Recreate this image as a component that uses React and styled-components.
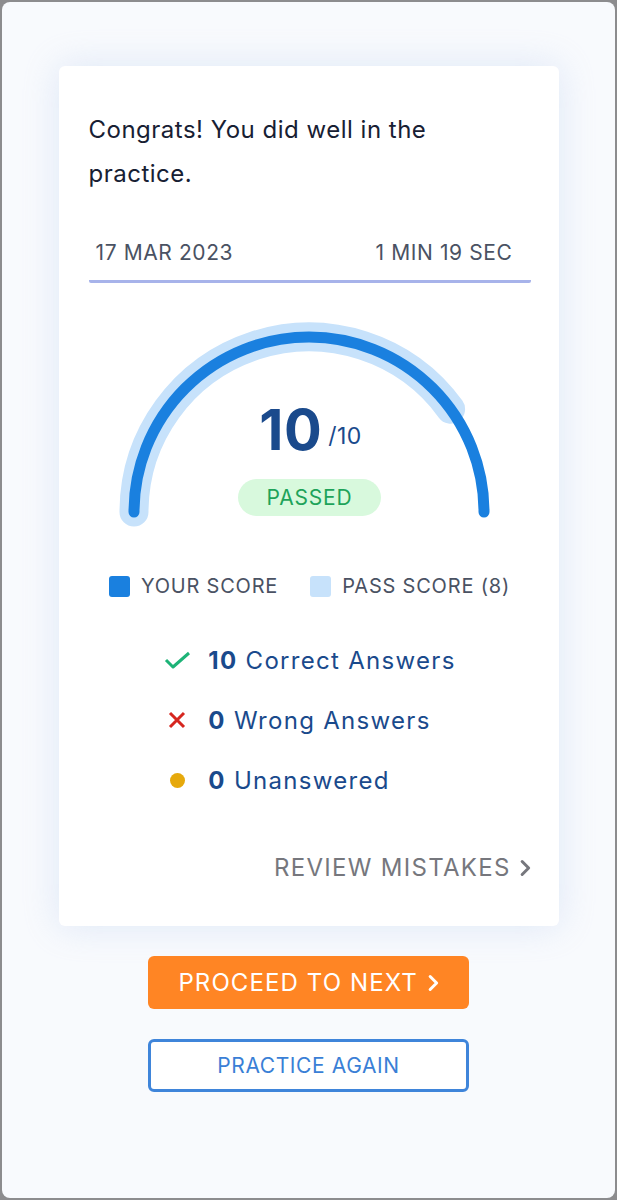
import React from "react";
import styled, { createGlobalStyle } from "styled-components";

const Global = createGlobalStyle`
  html, body {
    margin: 0;
    padding: 0;
    background: #8c8c8e;
  }
  body {
    font-family: Inter, "Noto Sans", sans-serif;
  }
`;

const Frame = styled.div`
  margin: 2px;
  height: 1196px;
  border-radius: 8px;
  background: #f8fafd;
  display: flex;
  flex-direction: column;
  align-items: center;
  padding-top: 64px;
  box-sizing: border-box;
`;

const Card = styled.div`
  width: 500px;
  box-sizing: border-box;
  background: #ffffff;
  border-radius: 6px;
  box-shadow: 0 0 36px rgba(190, 208, 240, 0.45);
  padding: 42px 28px 46px 30px;
  display: flex;
  flex-direction: column;
`;

const Message = styled.p`
  margin: 0;
  font-size: 24px;
  line-height: 44px;
  letter-spacing: 0.5px;
  color: #172033;
  padding-right: 60px;
`;

const Meta = styled.div`
  margin-top: 45px;
  display: flex;
  justify-content: space-between;
  padding: 0 18px 15px 7px;
  border-bottom: 3px solid #a7b3ea;
  border-radius: 0 0 2px 2px;
  font-size: 21px;
  line-height: 24px;
  letter-spacing: 0.6px;
  color: #4a5263;
`;

const Gauge = styled.div`
  position: relative;
  margin-top: 27px;
  align-self: center;
  width: 400px;
  height: 230px;
  svg {
    display: block;
  }
`;

const GaugeLabel = styled.div`
  position: absolute;
  left: 0;
  right: 0;
  top: 88px;
  display: flex;
  flex-direction: column;
  align-items: center;
`;

const ScoreLine = styled.div`
  display: flex;
  align-items: flex-end;
  gap: 6px;
  color: #1a4a8c;
  padding-left: 2px;
`;

const BigScore = styled.span`
  font-size: 56px;
  font-weight: 700;
  line-height: 64px;
  letter-spacing: 0.5px;
`;

const OutOf = styled.span`
  font-size: 23px;
  line-height: 28px;
  margin-bottom: 12px;
  letter-spacing: 0.4px;
`;

const Pill = styled.div`
  margin-top: 17px;
  height: 37px;
  padding: 0 29px;
  border-radius: 19px;
  background: #d8f9dd;
  color: #1ea35a;
  font-size: 21px;
  line-height: 37px;
  letter-spacing: 0.8px;
`;

const Legend = styled.div`
  margin-top: 34px;
  display: flex;
  justify-content: center;
  gap: 32px;
  font-size: 20px;
  line-height: 24px;
  letter-spacing: 0.8px;
  color: #4a5263;
`;

const LegendItem = styled.div`
  display: flex;
  align-items: center;
  gap: 11px;
`;

const Swatch = styled.span`
  width: 21px;
  height: 21px;
  border-radius: 3px;
  background: ${(p) => p.$color};
`;

const Stats = styled.ul`
  list-style: none;
  margin: 32px 0 0;
  padding: 0;
  align-self: center;
`;

const StatRow = styled.li`
  height: 60px;
  display: flex;
  align-items: center;
  gap: 17px;
  font-size: 24px;
  letter-spacing: 1.3px;
  color: #1a4a8c;
  b {
    font-weight: 700;
  }
`;

const StatIcon = styled.span`
  width: 28px;
  display: flex;
  justify-content: center;
  align-items: center;
`;

const Dot = styled.span`
  width: 15px;
  height: 15px;
  border-radius: 50%;
  background: #e6a90c;
`;

const Review = styled.a`
  margin-top: 46px;
  align-self: flex-end;
  display: flex;
  align-items: center;
  gap: 9px;
  font-size: 24px;
  line-height: 24px;
  color: #76777d;
  letter-spacing: 1.3px;
  text-decoration: none;
`;

const Button = styled.button`
  width: 321px;
  height: 53px;
  margin-top: 30px;
  border-radius: 6px;
  box-sizing: border-box;
  font-family: inherit;
  font-size: ${(p) => (p.$outline ? "21px" : "24px")};
  letter-spacing: ${(p) => (p.$outline ? "0.6px" : "1.1px")};
  display: flex;
  align-items: center;
  justify-content: center;
  gap: 10px;
  cursor: pointer;
  background: ${(p) => (p.$outline ? "#ffffff" : "#ff8524")};
  color: ${(p) => (p.$outline ? "#3a7fd6" : "#ffffff")};
  border: ${(p) => (p.$outline ? "3px solid #3f85da" : "none")};
`;

const Chevron = ({ color, size = 16 }) => (
  <svg width={size * 0.6} height={size} viewBox="0 0 10 16">
    <polyline points="2,2 8,8 2,14" fill="none" stroke={color} strokeWidth="2.8" strokeLinecap="round" strokeLinejoin="round" />
  </svg>
);

const cx = 199;
const cy = 202;
const r = 175;
const passAngle = Math.PI * (1 - 8 / 10);
const passX = cx + r * Math.cos(passAngle);
const passY = cy - r * Math.sin(passAngle);

export default function App() {
  return (
    <>
      <Global />
      <Frame>
        <Card>
          <Message>Congrats! You did well in the practice.</Message>
          <Meta>
            <span>17 MAR 2023</span>
            <span>1 MIN 19 SEC</span>
          </Meta>
          <Gauge>
            <svg width="400" height="230" viewBox="0 0 400 230">
              <path
                d={`M ${cx - r} ${cy} A ${r} ${r} 0 0 1 ${passX} ${passY}`}
                fill="none"
                stroke="#c7e2fb"
                strokeWidth="29"
                strokeLinecap="round"
              />
              <path
                d={`M ${cx - r} ${cy} A ${r} ${r} 0 0 1 ${cx + r} ${cy}`}
                fill="none"
                stroke="#1a80df"
                strokeWidth="11"
                strokeLinecap="round"
              />
            </svg>
            <GaugeLabel>
              <ScoreLine>
                <BigScore>10</BigScore>
                <OutOf>/10</OutOf>
              </ScoreLine>
              <Pill>PASSED</Pill>
            </GaugeLabel>
          </Gauge>
          <Legend>
            <LegendItem>
              <Swatch $color="#1a80df" />
              YOUR SCORE
            </LegendItem>
            <LegendItem>
              <Swatch $color="#c7e2fb" />
              PASS SCORE (8)
            </LegendItem>
          </Legend>
          <Stats>
            <StatRow>
              <StatIcon>
                <svg width="27" height="20" viewBox="0 0 27 20">
                  <polyline points="2,10 9,17 25,3" fill="none" stroke="#1db377" strokeWidth="3" strokeLinejoin="round" />
                </svg>
              </StatIcon>
              <span><b>10</b> Correct Answers</span>
            </StatRow>
            <StatRow>
              <StatIcon>
                <svg width="18" height="18" viewBox="0 0 18 18">
                  <path d="M2 2 L16 16 M16 2 L2 16" stroke="#d6261f" strokeWidth="3" />
                </svg>
              </StatIcon>
              <span><b>0</b> Wrong Answers</span>
            </StatRow>
            <StatRow>
              <StatIcon>
                <Dot />
              </StatIcon>
              <span><b>0</b> Unanswered</span>
            </StatRow>
          </Stats>
          <Review href="#">
            REVIEW MISTAKES
            <Chevron color="#76777d" size={18} />
          </Review>
        </Card>
        <Button>
          PROCEED TO NEXT
          <Chevron color="#ffffff" size={18} />
        </Button>
        <Button $outline>PRACTICE AGAIN</Button>
      </Frame>
    </>
  );
}
